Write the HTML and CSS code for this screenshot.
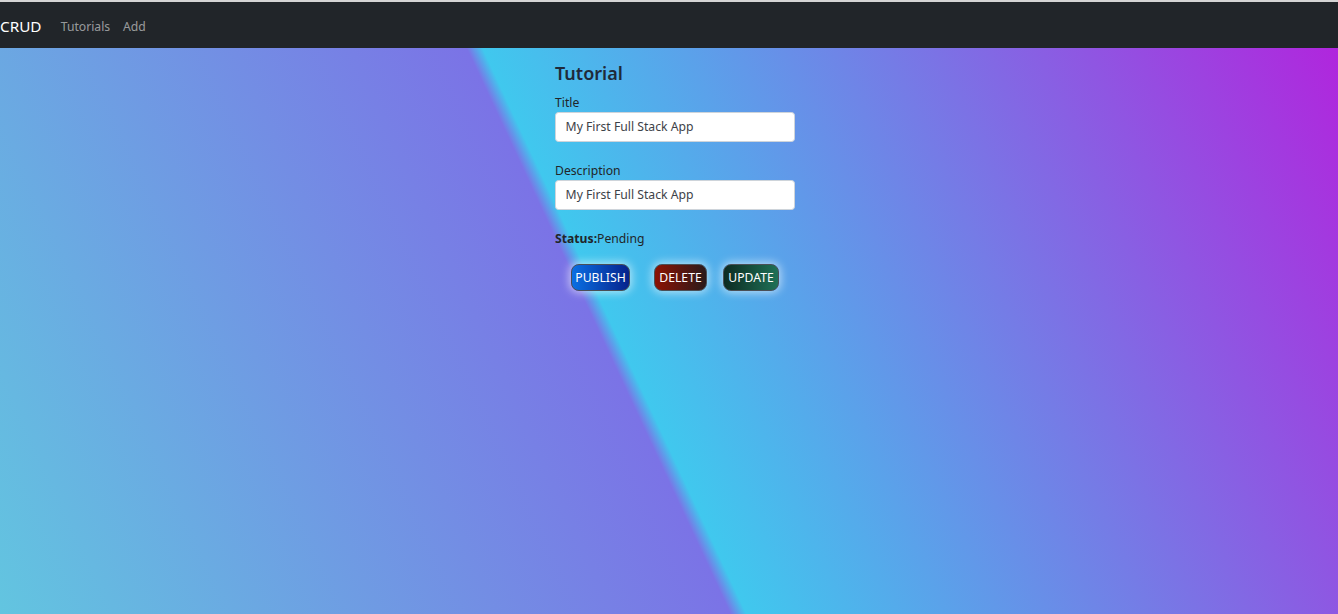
FILE: index.html
```html
<!DOCTYPE html>
<html lang="en">
<head>
<meta charset="utf-8">
<title>CRUD</title>
<link rel="stylesheet" href="styles.css">
</head>
<body>
<div class="page">
  <div class="topline"></div>
  <nav class="navbar">
    <a class="brand" href="#">CRUD</a>
    <a class="nav-link" href="#">Tutorials</a>
    <a class="nav-link" href="#">Add</a>
  </nav>
  <main class="main">
    <div class="edit-form">
      <h4 class="heading">Tutorial</h4>
      <form>
        <div class="form-group">
          <label class="label" for="title">Title</label>
          <input class="form-control" id="title" type="text" value="My First Full Stack App">
        </div>
        <div class="form-group">
          <label class="label" for="description">Description</label>
          <input class="form-control" id="description" type="text" value="My First Full Stack App">
        </div>
        <div class="status"><strong>Status:</strong>Pending</div>
      </form>
      <div class="actions">
        <button class="btn btn-publish" type="button">PUBLISH</button>
        <button class="btn btn-delete" type="button">DELETE</button>
        <button class="btn btn-update" type="button">UPDATE</button>
      </div>
    </div>
  </main>
</div>
</body>
</html>
```
FILE: styles.css
```css
* { box-sizing: border-box; }
html, body { margin: 0; padding: 0; height: 100%; }
body {
  font-family: "Noto Sans", "Open Sans", sans-serif;
  font-size: 12.2px;
  line-height: 1.5;
  color: #212529;
}
.page {
  min-height: 100vh;
  display: flex;
  flex-direction: column;
}
.topline {
  height: 2px;
  background: #d4d4d4;
}
.navbar {
  height: 46px;
  padding-top: 2px;
  background: #212529;
  display: flex;
  align-items: center;
}
.brand {
  color: #fff;
  font-size: 15.3px;
  text-decoration: none;
  margin-right: 12.8px;
  line-height: 24px;
}
.nav-link {
  color: rgba(255,255,255,.55);
  text-decoration: none;
  padding: 0 6.4px;
  line-height: 19px;
}
.main {
  flex: 1;
  background: linear-gradient(65deg, #62c5e0 0%, #7b73e6 45.6%, #40c8ee 46.6%, #b026dd 100%);
  padding-top: 15px;
  padding-left: 12px;
}
.edit-form {
  width: 240px;
  margin: 0 auto;
}
.heading {
  font-size: 18px;
  font-weight: 600;
  line-height: 1.2;
  margin: 0 0 8px 0;
  color: #1f2a3a;
}
.form-group {
  margin-bottom: 19px;
}
.label {
  display: block;
  line-height: 19px;
}
.form-control {
  display: block;
  width: 100%;
  height: 30px;
  padding: 0 9.6px;
  font-family: inherit;
  font-size: 12.2px;
  color: #3d4248;
  background: #fff;
  border: 1px solid #ced4da;
  border-radius: 3.5px;
  outline: none;
}
.status {
  line-height: 19px;
}
.status strong { font-weight: 700; }
.actions {
  display: flex;
  align-items: center;
  margin-top: 16px;
  padding-left: 16px;
}
.btn {
  height: 27px;
  padding: 0 3px;
  font-family: inherit;
  font-size: 12.2px;
  color: #fff;
  border: 1px solid #4a4f56;
  border-radius: 8px;
  box-shadow: 0 0 8px 2px rgba(255,255,255,.55);
  cursor: pointer;
}
.btn-publish {
  width: 59px;
  background: linear-gradient(90deg, #0a6fe3, #06238c);
}
.btn-delete {
  width: 53px;
  margin-left: 24px;
  background: linear-gradient(90deg, #8c1203, #2a1b1b);
}
.btn-update {
  width: 56px;
  margin-left: 16px;
  background: linear-gradient(90deg, #0c2b22, #1f7157);
}
```
